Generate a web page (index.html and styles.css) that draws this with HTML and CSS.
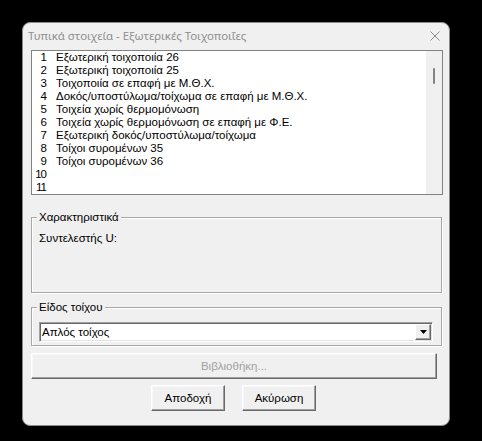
FILE: index.html
```html
<!DOCTYPE html>
<html lang="el">
<head>
<meta charset="utf-8">
<title>Τυπικά στοιχεία</title>
<link rel="stylesheet" href="styles.css">
</head>
<body>
<div class="window">
  <div class="titlebar">
    <span class="title">Τυπικά στοιχεία - Εξωτερικές Τοιχοποιΐες</span>
    <svg class="close" width="10" height="10" viewBox="0 0 10 10"><path d="M0.5 0.5 L9.5 9.5 M9.5 0.5 L0.5 9.5" stroke="#8c8c8c" stroke-width="1" fill="none"/></svg>
  </div>
  <div class="client">
    <div class="listbox">
      <ul class="items">
        <li><span class="num">1</span><span class="txt">Εξωτερική τοιχοποιία 26</span></li>
        <li><span class="num">2</span><span class="txt">Εξωτερική τοιχοποιία 25</span></li>
        <li><span class="num">3</span><span class="txt">Τοιχοποιία σε επαφή με Μ.Θ.Χ.</span></li>
        <li><span class="num">4</span><span class="txt">Δοκός/υποστύλωμα/τοίχωμα σε επαφή με Μ.Θ.Χ.</span></li>
        <li><span class="num">5</span><span class="txt">Τοιχεία χωρίς θερμομόνωση</span></li>
        <li><span class="num">6</span><span class="txt">Τοιχεία χωρίς θερμομόνωση σε επαφή με Φ.Ε.</span></li>
        <li><span class="num">7</span><span class="txt">Εξωτερική δοκός/υποστύλωμα/τοίχωμα</span></li>
        <li><span class="num">8</span><span class="txt">Τοίχοι συρομένων 35</span></li>
        <li><span class="num">9</span><span class="txt">Τοίχοι συρομένων 36</span></li>
        <li><span class="num">10</span><span class="txt"></span></li>
        <li><span class="num">11</span><span class="txt"></span></li>
      </ul>
      <div class="scrollbar"><div class="thumb"></div></div>
    </div>

    <div class="group group-props">
      <div class="legend">Χαρακτηριστικά</div>
      <div class="prop">Συντελεστής U:</div>
    </div>

    <div class="group group-type">
      <div class="legend">Είδος τοίχου</div>
      <div class="combo">
        <span class="combo-text">Απλός τοίχος</span>
        <span class="combo-btn"><svg width="7" height="4" viewBox="0 0 7 4"><path d="M0 0 H7 L3.5 4 Z" fill="#000"/></svg></span>
      </div>
    </div>

    <button class="btn btn-lib" disabled>Βιβλιοθήκη...</button>

    <div class="actions">
      <button class="btn btn-ok">Αποδοχή</button>
      <button class="btn btn-cancel">Ακύρωση</button>
    </div>
  </div>
</div>
</body>
</html>
```
FILE: styles.css
```css
html, body {
  margin: 0;
  padding: 0;
  background: #000;
}
body {
  padding: 22px 0 0 22px;
  font-family: "Liberation Sans", Arial, sans-serif;
  font-size: 11.5px;
  color: #000;
}
.window {
  width: 428px;
  height: 404px;
  box-sizing: border-box;
  background: #f0f0f0;
  border: 1px solid #8a8a8a;
  border-radius: 8px;
  display: flex;
  flex-direction: column;
}
.titlebar {
  height: 24px;
  display: flex;
  align-items: center;
  justify-content: space-between;
  padding: 1px 9px 0 5px;
  box-sizing: border-box;
}
.title {
  font-family: "Noto Sans", "Open Sans", sans-serif;
  font-size: 11.4px;
  color: #8e8e8e;
  white-space: nowrap;
}
.close {
  display: block;
}
.client {
  display: flex;
  flex-direction: column;
  align-items: flex-start;
  padding: 3px 0 0 8px;
}
.listbox {
  width: 412px;
  height: 145px;
  box-sizing: border-box;
  border: 1px solid #828282;
  background: #fff;
  display: flex;
}
.items {
  list-style: none;
  margin: 0;
  padding: 0;
  flex: 1;
}
.items li {
  height: 13px;
  line-height: 13px;
  display: flex;
  white-space: nowrap;
}
.num {
  width: 14px;
  text-align: right;
  flex: none;
  letter-spacing: -1px;
}
.txt {
  margin-left: 10px;
}
.scrollbar {
  width: 16px;
  background: #f0f0f0;
  padding-top: 17px;
  box-sizing: border-box;
}
.thumb {
  width: 2px;
  height: 16px;
  margin-left: 7px;
  background: #858585;
  border-radius: 1px;
}
.group {
  box-sizing: border-box;
  border: 1px solid #a8a8a8;
  box-shadow: inset 1px 1px 0 #fff, 1px 1px 0 #fff;
  width: 411px;
  padding: 0 0 0 5px;
}
.legend {
  margin-top: -7px;
  height: 13px;
  line-height: 13px;
  padding: 0 2px;
  background: #f0f0f0;
  width: fit-content;
}
.group-props {
  margin-top: 22px;
  height: 76px;
}
.prop {
  margin-top: 8px;
  margin-left: 2px;
  line-height: 13px;
}
.group-type {
  margin-top: 14px;
  height: 39px;
}
.combo {
  margin-top: 8px;
  margin-left: 2px;
  width: 394px;
  height: 20px;
  box-sizing: border-box;
  background: #fff;
  border-style: solid;
  border-width: 1px;
  border-color: #a0a0a0 #fff #fff #a0a0a0;
  box-shadow: inset 1px 1px 0 #696969, inset -1px -1px 0 #e3e3e3;
  display: flex;
  align-items: stretch;
  padding: 1px 1px 1px 2px;
}
.combo-text {
  flex: 1;
  line-height: 16px;
  padding-left: 0;
}
.combo-btn {
  width: 16px;
  box-sizing: border-box;
  background: #f0f0f0;
  border-style: solid;
  border-width: 1px;
  border-color: #fff #696969 #696969 #fff;
  box-shadow: inset -1px -1px 0 #a0a0a0;
  display: flex;
  align-items: center;
  justify-content: center;
  padding-bottom: 1px;
}
.combo-btn svg {
  display: block;
}
.btn {
  font-family: "Liberation Sans", Arial, sans-serif;
  font-size: 11.5px;
  color: #000;
  background: #f0f0f0;
  box-sizing: border-box;
  height: 26px;
  border-style: solid;
  border-width: 1px;
  border-color: #fff #696969 #696969 #fff;
  box-shadow: inset -1px -1px 0 #a0a0a0, inset 1px 1px 0 #f8f8f8;
  padding: 0;
  margin: 0;
  border-radius: 0;
}
.btn-lib {
  margin-top: 7px;
  width: 406px;
  color: #a0a0a0;
}
.actions {
  margin-top: 6px;
  display: flex;
  gap: 17px;
  padding-left: 120px;
}
.btn-ok, .btn-cancel {
  width: 74px;
}
```
